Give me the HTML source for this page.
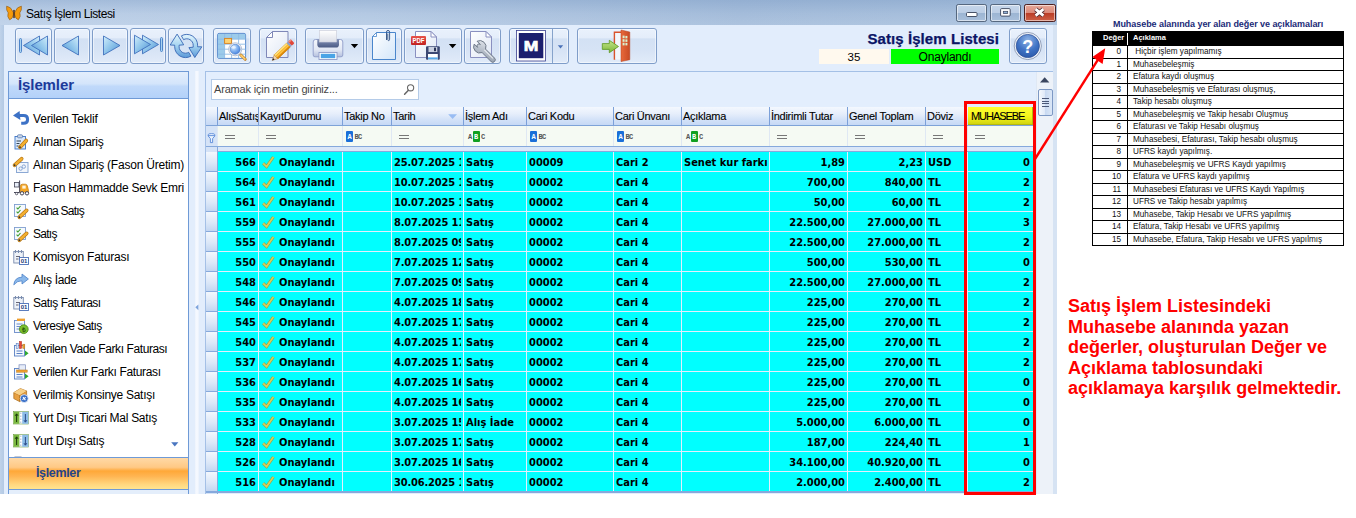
<!DOCTYPE html><html><head><meta charset="utf-8"><title>Satış İşlem Listesi</title><style>
*{box-sizing:border-box;margin:0;padding:0}
html,body{width:1356px;height:518px;background:#fff;overflow:hidden}
body{position:relative;font-family:"Liberation Sans",sans-serif;font-size:11px;color:#000}
.abs{position:absolute}
svg{position:absolute;overflow:visible}
#win{position:absolute;left:0;top:0;width:1057px;height:494px;background:#e2edfc;overflow:hidden}
#title{position:absolute;left:0;top:0;width:1057px;height:25px;background:linear-gradient(rgba(110,145,190,.30) 0%,rgba(255,255,255,0) 55%,rgba(235,245,255,.12) 100%),linear-gradient(90deg,#bccfe7 0%,#b4c9e3 35%,#a4bcda 70%,#a8c0dd 100%)}
#title .t{position:absolute;left:26px;top:7px;font-size:12px;line-height:14px;color:#000;letter-spacing:-0.42px}
#frameL{position:absolute;left:0;top:25px;width:4px;height:470px;background:linear-gradient(90deg,#bfd2e9,#b3c9e4)}
#frameR{position:absolute;left:1053px;top:25px;width:4px;height:470px;background:#d6e3f3}
.wb{position:absolute;top:4.2px;height:17.4px;border:1px solid #56687f;border-radius:2.2px;background:linear-gradient(#c6d6ea 0%,#bccee5 47%,#9cb5d3 52%,#a9c0db 100%);box-shadow:inset 0 0 0 1px rgba(255,255,255,.55)}
.wb.close{background:linear-gradient(#e6a899 0%,#dc8b7b 47%,#bb3d27 52%,#cd6248 100%);border-color:#4e2020}
.tb{position:absolute;top:28.2px;height:35.4px;border:1px solid #7f9dc9;border-radius:3px;background:linear-gradient(#e9f1fc 0%,#e4edfa 26%,#d3e1f4 29%,#d6e3f5 60%,#e1ebf9 100%);box-shadow:inset 0 0 0 1px rgba(255,255,255,.5)}
#bigtitle{position:absolute;right:58px;top:30px;font-weight:bold;font-size:15px;line-height:18px;color:#0b1566;letter-spacing:.08px;white-space:nowrap;-webkit-text-stroke:.25px #0b1566}
#b35{position:absolute;left:819px;top:49px;width:70px;height:15px;background:#fff9ee;font-size:11.5px;line-height:17px;text-align:center}
#bon{position:absolute;left:891px;top:49px;width:108px;height:15px;background:#00ff00;font-size:12px;line-height:17px;letter-spacing:-.2px;text-align:center}
#tline{display:none}
/* side panel */
#side{position:absolute;left:8px;top:71px;width:181px;height:424px;border:1px solid #6f9ad6;background:#fff;overflow:hidden}
#sideh{position:absolute;left:0;top:0;width:179px;height:27px;background:linear-gradient(#e3eefc 0%,#d4e5fb 45%,#c0d9fa 55%,#b3d1f9 100%);border-bottom:1px solid #6f9ad6}
#sideh span{position:absolute;left:9px;top:4px;font-weight:bold;font-size:15px;line-height:18px;color:#1c3a9a;letter-spacing:-.1px}
.si{position:absolute;left:24px;font-size:12px;line-height:14px;white-space:nowrap;letter-spacing:-.22px;color:#000}
#sideb{position:absolute;left:0;top:385px;width:179px;height:33px;border-top:1px solid #6f9ad6;border-bottom:1px solid #6f9ad6;background:linear-gradient(#ffd9a6 0%,#ffc985 30%,#ffa838 42%,#ffb654 60%,#ffd77f 85%,#ffe48f 100%)}
#sideb span{position:absolute;left:27px;top:8px;font-weight:bold;font-size:12.5px;line-height:15px;color:#264488;letter-spacing:-.35px}
#sidef{position:absolute;left:0;top:418px;width:179px;height:6px;background:#e4eefb}
#split{position:absolute;left:195px;top:71px;width:4px;height:424px;background:linear-gradient(90deg,#edf3fd,#f7faff 50%,#eaf1fc)}
/* grid */
#grid{position:absolute;left:205px;top:71px;width:848px;height:424px;border:1px solid #a4c0e6;background:#e3eefd}
#search{position:absolute;left:211px;top:79px;width:208px;height:21px;border:1px solid #b4cbe8;background:#fff}
#search span{position:absolute;left:2px;top:3px;font-size:11px;line-height:13px;color:#444;letter-spacing:-.17px;white-space:nowrap}
#hdr{position:absolute;left:206px;top:107px;width:828px;height:18px;background:linear-gradient(#f4f8fe 0%,#e6eefb 38%,#d2e1f8 72%,#c6d9f5 100%)}
.hc{position:absolute;top:0;height:18px;border-left:1px solid #7ba0d9;font-size:11px;line-height:18px;padding-left:1px;white-space:nowrap;overflow:hidden;letter-spacing:-.28px;-webkit-text-stroke:.1px #000}
#hline{position:absolute;left:206px;top:125px;width:828px;height:1px;background:#7ea3d8}
#frow{position:absolute;left:217px;top:126px;width:817px;height:20px;background:#f5faf3}
.fc{position:absolute;top:0;height:20px;border-left:1px solid #dfe8f3}
#ind{position:absolute;left:206px;top:126px;width:11px;height:368px;background:#d5e3f7}
.cell{position:absolute;height:19px;line-height:21px;font-weight:bold;font-size:11px;white-space:nowrap;overflow:hidden;font-family:"DejaVu Sans Condensed","DejaVu Sans","Liberation Sans",sans-serif;font-stretch:condensed;background:#00ffff;color:#000}
.r{text-align:right;padding-right:2px}
.l{padding-left:2px;border-right:2.5px solid #0ff}
.last{padding-right:4px}

.eq{position:absolute;left:7px;top:9px;width:9.5px;height:4px;border-top:1px solid #777;border-bottom:1px solid #777}
.abc{position:absolute;left:3px;top:5px;height:11px;font-family:"Liberation Mono",monospace;font-size:7px;line-height:12px;font-weight:bold;color:#555;letter-spacing:-.55px;white-space:nowrap}
.abc.g{left:4px}
.abc b{display:inline-block;width:7px;height:11px;text-align:center;color:#fff;border-radius:1px;margin-right:1.4px;letter-spacing:0}
.abc b.bl{background:#1a6fd8}
.abc b.gr{background:#10a020;margin-left:1px}

.indc{position:absolute;left:206px;width:11px;height:20px;background:linear-gradient(#f3f7fd 0%,#dce8f8 55%,#c3d6f1 100%);border-bottom:1px solid #86a9dc}
#sb{position:absolute;left:1036px;top:72px;width:17px;height:423px;background:#edf2f9;border-left:1px solid #dfe8f4}
#sbt{position:absolute;left:1px;top:17px;width:15px;height:27px;border:1px solid #7c98c4;border-radius:2px;background:linear-gradient(90deg,#f6f9fd 0%,#dfe9f8 45%,#c9daf2 50%,#dbe7f7 100%)}
#sbt i{position:absolute;left:3px;top:8px;width:7px;height:9px;background:repeating-linear-gradient(#4a5878 0,#4a5878 1px,transparent 1px,transparent 2.5px)}
/* right side */
#ltitle{position:absolute;left:1113px;top:18px;font-weight:bold;font-size:9px;line-height:12px;color:#1a2a78;white-space:nowrap;letter-spacing:-.06px}
#leg{position:absolute;left:1092px;top:31px;width:252px;height:215px;border:1px solid #000;background:#fff}
.lr{position:absolute;left:0;width:250px;border-top:1.3px solid #000;font-size:8.2px;line-height:11px;color:#111}
.lr .n{position:absolute;left:0;top:0;width:28px;text-align:right}
.lr .d{position:absolute;left:40px;top:0;white-space:nowrap}
#redtxt{position:absolute;left:1068px;top:296px;font-weight:bold;font-size:18px;line-height:20.5px;color:#ff0000;white-space:nowrap}
</style></head><body>
<div id="win">
<div id="title"><span class="t">Satış İşlem Listesi</span>
<div class="wb" style="left:956.2px;width:31.2px"></div><div class="wb" style="left:990.3px;width:31.2px"></div><div class="wb close" style="left:1024.2px;width:31.6px"></div>
<svg style="left:0;top:0" width="1057" height="25"><rect x="966.5" y="12.5" width="10.5" height="4" rx="1" fill="#fff" stroke="#384258" stroke-width=".9"/><rect x="1000.6" y="8.6" width="9.6" height="7.5" rx="1" fill="#fff" stroke="#384258" stroke-width=".9"/><rect x="1003.3" y="11.3" width="4.4" height="2.3" fill="#8fb0d8" stroke="#384258" stroke-width=".7"/><path d="M1035.6,9.2 L1043.4,15.6 M1043.4,9.2 L1035.6,15.6" stroke="#4a2a30" stroke-width="4.4"/><path d="M1035.6,9.2 L1043.4,15.6 M1043.4,9.2 L1035.6,15.6" stroke="#fff" stroke-width="2.8"/><g><path d="M13.4,12.6 Q11,6.4 6.6,6.2 Q6,10.4 8.2,12.8 Q6.8,16.6 9.6,19.8 Q12.6,19 13.4,14.8 Z" fill="#f59a0c" stroke="#8a5410" stroke-width=".6"/><path d="M14.6,12.6 Q17,6.4 21.4,6.2 Q22,10.4 19.8,12.8 Q21.2,16.6 18.4,19.8 Q15.4,19 14.6,14.8 Z" fill="#f59a0c" stroke="#8a5410" stroke-width=".6"/><path d="M14,10.5 V17.5" stroke="#4a2c14" stroke-width="1.5" stroke-linecap="round"/></g></svg>
</div>
<div id="frameL"></div><div id="frameR"></div>
<div class="tb" style="left:15.3px;width:36.9px"></div>
<div class="tb" style="left:53.6px;width:36.7px"></div>
<div class="tb" style="left:91.6px;width:36.6px"></div>
<div class="tb" style="left:129.6px;width:36.7px"></div>
<div class="tb" style="left:167.8px;width:36.6px"></div>
<div class="tb" style="left:213.2px;width:37.7px"></div>
<div class="tb" style="left:259.2px;width:37.6px"></div>
<div class="tb" style="left:305.3px;width:58.8px"></div>
<div class="tb" style="left:365.6px;width:36.6px"></div>
<div class="tb" style="left:403.8px;width:58.5px"></div>
<div class="tb" style="left:463.8px;width:37.0px"></div>
<div class="tb" style="left:509.4px;width:59.3px"></div>
<div class="tb" style="left:577.1px;width:79.5px"></div>
<div class="tb" style="left:1009.2px;width:37.6px"></div>
<svg style="left:0;top:0" width="1057" height="494"><defs>
<linearGradient id="gTri" x1="0" y1="0" x2="1" y2="1"><stop offset="0" stop-color="#d3effb"/><stop offset=".5" stop-color="#8cc3ea"/><stop offset="1" stop-color="#4f8fd0"/></linearGradient>
<linearGradient id="gTriL" x1="1" y1="0" x2="0" y2="1"><stop offset="0" stop-color="#d3effb"/><stop offset=".5" stop-color="#8cc3ea"/><stop offset="1" stop-color="#4f8fd0"/></linearGradient>
<linearGradient id="gRef" x1="0" y1="0" x2="0" y2="1"><stop offset="0" stop-color="#e4f6fd"/><stop offset=".5" stop-color="#a4d3f0"/><stop offset="1" stop-color="#5a98d8"/></linearGradient>
<linearGradient id="gDoc" x1="0" y1="0" x2="1" y2="1"><stop offset="0" stop-color="#ffffff"/><stop offset="1" stop-color="#dfe7f5"/></linearGradient>
<linearGradient id="gDocB" x1="0" y1="0" x2="1" y2="1"><stop offset="0" stop-color="#ffffff"/><stop offset="1" stop-color="#d3e6fa"/></linearGradient>
<radialGradient id="gLens" cx=".35" cy=".3" r=".8"><stop offset="0" stop-color="#d9ecff"/><stop offset=".5" stop-color="#7fb0f0"/><stop offset="1" stop-color="#3c78d8"/></radialGradient>
<linearGradient id="gPrn" x1="0" y1="0" x2="0" y2="1"><stop offset="0" stop-color="#f4f7fc"/><stop offset=".6" stop-color="#e1e7f4"/><stop offset="1" stop-color="#b4c0de"/></linearGradient>
<linearGradient id="gSlot" x1="0" y1="0" x2="0" y2="1"><stop offset="0" stop-color="#8694b8"/><stop offset="1" stop-color="#4a5a84"/></linearGradient>
<linearGradient id="gPaper" x1="0" y1="0" x2="0" y2="1"><stop offset="0" stop-color="#ffffff"/><stop offset="1" stop-color="#dcdfe8"/></linearGradient>
<linearGradient id="gPdf" x1="0" y1="0" x2="0" y2="1"><stop offset="0" stop-color="#e8544a"/><stop offset="1" stop-color="#c02020"/></linearGradient>
<linearGradient id="gWr" x1="0" y1="0" x2="1" y2="1"><stop offset="0" stop-color="#e4e8ee"/><stop offset=".5" stop-color="#b4bcc8"/><stop offset="1" stop-color="#8c96a6"/></linearGradient>
<linearGradient id="gGrn" x1="0" y1="0" x2="0" y2="1"><stop offset="0" stop-color="#c4e48a"/><stop offset="1" stop-color="#7cb838"/></linearGradient>
<linearGradient id="gDoor" x1="0" y1="0" x2="1" y2="0"><stop offset="0" stop-color="#e86a3c"/><stop offset="1" stop-color="#c84a24"/></linearGradient>
<radialGradient id="gHelp" cx=".5" cy=".25" r=".9"><stop offset="0" stop-color="#8fb4e6"/><stop offset=".5" stop-color="#3f72c4"/><stop offset="1" stop-color="#2450a0"/></radialGradient>
<linearGradient id="gPen" x1="0" y1="0" x2="1" y2="0"><stop offset="0" stop-color="#ffd75a"/><stop offset=".5" stop-color="#f5a818"/><stop offset="1" stop-color="#d88408"/></linearGradient>
<linearGradient id="gThumb" x1="0" y1="0" x2="1" y2="0"><stop offset="0" stop-color="#f4f8fd"/><stop offset=".45" stop-color="#dbe7f7"/><stop offset=".5" stop-color="#c5d8f1"/><stop offset="1" stop-color="#d9e6f7"/></linearGradient>
</defs><rect x="19.5" y="38.5" width="2" height="14" rx="1" fill="#a9d3f2" stroke="#4e84c8" stroke-width="1"/><polygon points="23.5,45.5 39.5,36 39.5,55" fill="url(#gTriL)" stroke="#3a6cba" stroke-width=".85" stroke-linejoin="round"/><polygon points="31.5,45.5 47.5,36 47.5,55" fill="url(#gTriL)" stroke="#3a6cba" stroke-width=".85" stroke-linejoin="round"/><polygon points="62,45.5 78.5,36 78.5,55" fill="url(#gTriL)" stroke="#3a6cba" stroke-width=".85" stroke-linejoin="round"/><polygon points="120,45.5 103.5,36 103.5,55" fill="url(#gTri)" stroke="#3a6cba" stroke-width=".85" stroke-linejoin="round"/><polygon points="158.5,44.5 142.5,35.2 142.5,53.8" fill="url(#gTri)" stroke="#3a6cba" stroke-width=".85" stroke-linejoin="round"/><polygon points="150.5,44.5 134.5,35.2 134.5,53.8" fill="url(#gTri)" stroke="#3a6cba" stroke-width=".85" stroke-linejoin="round"/><rect x="160.5" y="37.5" width="2" height="14" rx="1" fill="#a9d3f2" stroke="#4e84c8" stroke-width="1"/><g stroke="#3868b4" stroke-width=".9" stroke-linejoin="round" fill="url(#gRef)"><path d="M190.9,56.15 A10.8,10.8 0 0 1 174.7,46.8 L174.7,45.2 L170.2,45 L177.1,34.1 L183.7,44.8 L179.1,45.2 L179.1,46.8 A6.4,6.4 0 0 0 188.7,52.34 Z"/><path d="M181.4,35.85 A10.8,10.8 0 0 1 197.6,45.2 L197.6,46.8 L201.8,46.8 L194.8,57.5 L188.9,47.6 L193.2,47.2 L193.2,45.2 A6.4,6.4 0 0 0 183.6,39.66 Z"/></g><rect x="217.6" y="33.4" width="28" height="25" rx="1.5" fill="#fff" stroke="#4a80c8" stroke-width=".9"/><rect x="218" y="34" width="27.2" height="5" fill="#9ccbea"/><rect x="218" y="34" width="6.5" height="24" fill="#9ccbea"/><path d="M218,39.2H245.5 M218,44.2H245.5 M218,49.2H245.5 M218,54.2H245.5 M224.6,34V58 M231.6,34V58 M238.6,34V58" stroke="#8fbbe4" stroke-width=".9" fill="none"/><rect x="224.6" y="38.4" width="7" height="5" fill="#ffd372" stroke="#d8801c" stroke-width=".9"/><line x1="240.6" y1="54.8" x2="245.2" y2="59.3" stroke="#c08028" stroke-width="3" stroke-linecap="round"/><line x1="240.9" y1="55.1" x2="245" y2="59.1" stroke="#ffd070" stroke-width="1.5" stroke-linecap="round"/><circle cx="235.2" cy="49.3" r="6.5" fill="#f6f8fc" stroke="#a4b0c6" stroke-width=".8"/><circle cx="235.2" cy="49.3" r="5" fill="url(#gLens)" stroke="#4f80c8" stroke-width=".6"/><ellipse cx="233.6" cy="47.2" rx="2.2" ry="1.5" fill="#fff" opacity=".55"/><path d="M272.5,31.5 H288 V57.5 H266.5 V37.5 Z" fill="url(#gDoc)" stroke="#7f88b8"/><path d="M272.5,31.5 V37.5 H266.5 Z" fill="#fff" stroke="#7f88b8" stroke-linejoin="round"/><g transform="translate(272.2,60.4) rotate(-43.2)"><polygon points="0,0 5.4,-2.7 5.4,2.7" fill="#f2d5a8" stroke="#a87840" stroke-width=".5"/><polygon points="0,0 2.2,-1.1 2.2,1.1" fill="#223"/><rect x="5.4" y="-2.7" width="17" height="5.4" fill="#f5a818" stroke="#b87410" stroke-width=".5"/><rect x="5.4" y="-2.7" width="17" height="1.7" fill="#ffe07a"/><rect x="5.4" y="-.3" width="17" height="1.1" fill="#ffc64a"/><rect x="5.4" y="1.3" width="17" height="1.4" fill="#d8860c"/><rect x="22.4" y="-2.7" width="2" height="5.4" fill="#8aa0cc"/><rect x="24.4" y="-2.7" width="3.6" height="5.4" rx="1" fill="#e0483a"/><rect x="24.4" y="-2.7" width="3.6" height="1.6" rx=".8" fill="#f08878"/></g><rect x="319.5" y="30.5" width="17" height="12" fill="url(#gPaper)" stroke="#c4c8d8" stroke-width=".8"/><path d="M315.5,39.5 H340.5 Q342.8,39.5 342.8,42 V55 Q342.8,56.8 341,56.8 H315 Q313.2,56.8 313.2,55 V42 Q313.2,39.5 315.5,39.5 Z" fill="url(#gPrn)" stroke="#8f9cc8" stroke-width=".9"/><path d="M317.3,39.3 H339 V44.5 Q339,47.6 336,47.6 H320.3 Q317.3,47.6 317.3,44.5 Z" fill="url(#gSlot)"/><rect x="319.5" y="30.5" width="17" height="11.5" fill="url(#gPaper)" stroke="#d0d4e0" stroke-width=".6"/><rect x="319" y="52.5" width="18" height="7" fill="#fff" stroke="#8f9cc8" stroke-width=".9"/><rect x="320.8" y="53.8" width="14.4" height="4.4" fill="#4aa4e6"/><polygon points="350.8,44 358.2,44 354.5,48.2" fill="#000"/><path d="M376.5,32.5 H395.5 V59.5 H372.5 V36.5 Z" fill="url(#gDocB)" stroke="#4a86cc" stroke-width="1"/><path d="M376.5,32.5 V36.5 H372.5 Z" fill="#fff" stroke="#4a86cc" stroke-width=".8" stroke-linejoin="round"/><path d="M386.5,40 V32.2 Q386.5,30.4 388,30.4 Q389.6,30.4 389.6,32.2 V39.2 Q389.6,40.6 388.6,40.6 Q387.8,40.6 387.8,39.4 V33.5" fill="none" stroke="#3f5e8e" stroke-width="1"/><path d="M415.5,31.5 H431 L436.5,37 V57.5 H415.5 Z" fill="url(#gDoc)" stroke="#8a90c0"/><path d="M431,31.5 V37 H436.5 Z" fill="#fff" stroke="#8a90c0" stroke-linejoin="round"/><rect x="411" y="36" width="15" height="9" rx="1" fill="url(#gPdf)"/><text x="418.5" y="43.2" font-family="Liberation Sans,sans-serif" font-weight="bold" font-size="6.8" fill="#fff" text-anchor="middle" textLength="12" lengthAdjust="spacingAndGlyphs">PDF</text><rect x="426" y="46.2" width="13.8" height="13.6" rx="1" fill="#3b4874"/><rect x="428.5" y="47" width="8.8" height="5" fill="#c9d0e0"/><rect x="434" y="47.6" width="2" height="3.6" fill="#2a3358"/><rect x="428" y="54" width="9.8" height="5.8" fill="#fff"/><rect x="428" y="57.4" width="9.8" height="2" fill="#58a8e8"/><polygon points="448.9,44 456.3,44 452.6,48.2" fill="#000"/><path d="M470.5,31.5 H486 L491.5,37 V57.5 H470.5 Z" fill="url(#gDoc)" stroke="#8a90c0"/><path d="M486,31.5 V37 H491.5 Z" fill="#fff" stroke="#8a90c0" stroke-linejoin="round"/><g transform="translate(479.8,46.8) rotate(45)"><path d="M-5.87,-2.0 L-1.2,-2.0 A2.0,2.0 0 0 0 -1.2,2.0 L-5.87,2.0 A6.2,6.2 0 0 0 5.70,2.45 L18.4,2.45 A2.45,2.45 0 0 0 18.4,-2.45 L5.70,-2.45 A6.2,6.2 0 0 0 -5.87,-2.0 Z" fill="url(#gWr)" stroke="#6a7484" stroke-width=".9" stroke-linejoin="round"/><path d="M5.5,-1 L17.5,-1" stroke="#f2f4f8" stroke-width="1.1" opacity=".85"/></g><rect x="516.5" y="30.5" width="29" height="30.5" fill="#fff" stroke="#3a3f8e" stroke-width=".8"/><rect x="518.8" y="33" width="24.5" height="25.2" fill="#1b1e6e"/><text x="531" y="51" font-family="Liberation Sans,sans-serif" font-weight="bold" font-size="15.4" fill="#fff" text-anchor="middle" textLength="14.6" lengthAdjust="spacingAndGlyphs" stroke="#fff" stroke-width=".7">M</text><line x1="552.5" y1="29" x2="552.5" y2="63" stroke="#86a3cb"/><polygon points="557.8,45.3 563.2,45.3 560.5,48.5" fill="#4a72b8"/><path d="M614.5,59.7 V32.2 H622" fill="none" stroke="#d9532c" stroke-width="1.6"/><rect x="615.3" y="33" width="6" height="26.5" fill="#f2f6fb"/><polygon points="621,30 629.8,32 629.8,59.7 621,61.6" fill="url(#gDoor)" stroke="#b8401c" stroke-width=".5"/><g fill="#d8f0d0"><rect x="622.6" y="35.6" width="2" height="2.6"/><rect x="625.4" y="35.9" width="2" height="2.5"/><rect x="622.6" y="39.2" width="2" height="2.6"/><rect x="625.4" y="39.4" width="2" height="2.5"/><rect x="622.6" y="42.8" width="2" height="2.6"/><rect x="625.4" y="42.9" width="2" height="2.5"/></g><polygon points="602.3,43.6 609.3,43.6 609.3,40.3 618.5,46.5 609.3,52.7 609.3,49.4 602.3,49.4" fill="url(#gGrn)" stroke="#5c9820" stroke-width=".8" stroke-linejoin="round"/><circle cx="1027.8" cy="46" r="13.6" fill="#eef2f8" stroke="#8a98b4" stroke-width=".9"/><circle cx="1027.8" cy="46" r="11.6" fill="url(#gHelp)" stroke="#2a4c94" stroke-width=".7"/><text x="1027.8" y="52.6" font-family="Liberation Sans,sans-serif" font-weight="bold" font-size="18" fill="#fff" text-anchor="middle">?</text></svg>
<div id="bigtitle">Satış İşlem Listesi</div><div id="b35">35</div><div id="bon">Onaylandı</div><div id="tline"></div>
<div id="side"><div id="sideh"><span>İşlemler</span></div>
<svg style="left:4px;top:39px" width="16" height="16" viewBox="0 0 16 16"><path d="M6,4.6 H10.6 Q14.6,4.6 14.6,8.4 Q14.6,12.2 10.6,12.2 H8.2" fill="none" stroke="#3d72c6" stroke-width="3"/><polygon points="0,4.4 6.6,0 7.4,9" fill="#3d72c6"/></svg><div class="si" style="top:40px;letter-spacing:-0.169px">Verilen Teklif</div>
<svg style="left:4px;top:62px" width="16" height="16" viewBox="0 0 16 16"><rect x="2" y="2.5" width="10.5" height="12.5" fill="#dbe9fb" stroke="#3a74c8" stroke-width=".9"/><rect x="4.5" y=".8" width="5" height="3" rx="1" fill="#c8d4e6" stroke="#4a6ea8" stroke-width=".7"/><path d="M3.5,7H8M3.5,9.5H6.5M3.5,12H5.5" stroke="#345" stroke-width="1"/><line x1="7" y1="13.2" x2="13.2" y2="6.6" stroke="#b87818" stroke-width="3.8" stroke-linecap="round"/><line x1="7" y1="13.2" x2="13.2" y2="6.6" stroke="#f4b030" stroke-width="2.4" stroke-linecap="round"/><circle cx="7" cy="13.2" r=".9" fill="#333"/></svg><div class="si" style="top:63px;letter-spacing:-0.253px">Alınan Sipariş</div>
<svg style="left:4px;top:85px" width="16" height="16" viewBox="0 0 16 16"><rect x="3.5" y="5.5" width="11.5" height="10" fill="#f2f6fc" stroke="#7f9fd0" stroke-width=".9"/><circle cx="7.6" cy="11.6" r="1.7" fill="none" stroke="#7f9fd0" stroke-width=".9"/><circle cx="10.8" cy="9.6" r="1.7" fill="none" stroke="#7f9fd0" stroke-width=".9"/><line x1="1.6" y1="8.2" x2="8.6" y2="1.8" stroke="#b87818" stroke-width="3.8" stroke-linecap="round"/><line x1="1.6" y1="8.2" x2="8.6" y2="1.8" stroke="#f4b030" stroke-width="2.4" stroke-linecap="round"/><circle cx="1.6" cy="8.2" r=".9" fill="#333"/></svg><div class="si" style="top:86px;letter-spacing:-0.220px">Alınan Sipariş (Fason Üretim)</div>
<svg style="left:4px;top:108px" width="16" height="16" viewBox="0 0 16 16"><rect x="1.5" y="2.5" width="4.5" height="4.5" fill="#e8eef8" stroke="#445" stroke-width=".8"/><path d="M6.6,.5V12.5H1" stroke="#445" stroke-width="1" fill="none"/><path d="M7.4,12 V6.2 Q7.4,4.2 9.4,4.2 H12.4 Q14,4.2 14.4,6 L15.4,10 V12 Z" fill="#f5a623" stroke="#c47a10" stroke-width=".7"/><rect x="9.3" y="5.6" width="3.4" height="3" fill="#fff4dc"/><circle cx="9" cy="13.3" r="1.7" fill="#fff" stroke="#445" stroke-width="1"/><circle cx="14" cy="13.3" r="1.7" fill="#fff" stroke="#445" stroke-width="1"/><circle cx="3.6" cy="13.6" r="1.2" fill="#fff" stroke="#445" stroke-width=".8"/></svg><div class="si" style="top:109px;letter-spacing:-0.238px">Fason Hammadde Sevk Emri</div>
<svg style="left:4px;top:131px" width="16" height="16" viewBox="0 0 16 16"><rect x="1.5" y="1.5" width="11" height="12" fill="#f6f9fd" stroke="#7f9fd0" stroke-width=".9"/><path d="M3.6,4.6l1.3,1.4l2.6,-3M3.6,8.6l1.3,1.4l2.6,-3" stroke="#3a9a2a" stroke-width="1.1" fill="none"/><line x1="6.4" y1="14.2" x2="13.6" y2="7.4" stroke="#b87818" stroke-width="3.8" stroke-linecap="round"/><line x1="6.4" y1="14.2" x2="13.6" y2="7.4" stroke="#f4b030" stroke-width="2.4" stroke-linecap="round"/><circle cx="6.4" cy="14.2" r=".9" fill="#333"/></svg><div class="si" style="top:132px;letter-spacing:-0.771px">Saha Satış</div>
<svg style="left:4px;top:154px" width="16" height="16" viewBox="0 0 16 16"><rect x="1.5" y="1.5" width="11" height="12" fill="#f6f9fd" stroke="#7f9fd0" stroke-width=".9"/><path d="M3.6,4.6l1.3,1.4l2.6,-3M3.6,8.6l1.3,1.4l2.6,-3" stroke="#3a9a2a" stroke-width="1.1" fill="none"/><line x1="6.4" y1="14.2" x2="13.6" y2="7.4" stroke="#b87818" stroke-width="3.8" stroke-linecap="round"/><line x1="6.4" y1="14.2" x2="13.6" y2="7.4" stroke="#f4b030" stroke-width="2.4" stroke-linecap="round"/><circle cx="6.4" cy="14.2" r=".9" fill="#333"/></svg><div class="si" style="top:155px;letter-spacing:-0.730px">Satış</div>
<svg style="left:4px;top:177px" width="16" height="16" viewBox="0 0 16 16"><rect x="0.8" y="2.5" width="9.5" height="11.5" fill="#eef2f8" stroke="#7a8cae" stroke-width=".9"/><path d="M2.5,1v3M5.5,1v3M8.5,1v3" stroke="#7a8cae" stroke-width="1.1"/><path d="M3,7.5H7M3,10H5.5" stroke="#667" stroke-width="1"/><rect x="6.5" y="8.5" width="9" height="7" fill="#fff" stroke="#4a70b8" stroke-width=".9"/><text x="11" y="14.3" font-family="Liberation Sans,sans-serif" font-size="6" font-weight="bold" fill="#223a78" text-anchor="middle">01</text></svg><div class="si" style="top:178px;letter-spacing:-0.220px">Komisyon Faturası</div>
<svg style="left:4px;top:200px" width="16" height="16" viewBox="0 0 16 16"><path d="M.8,12.8 Q1.6,5.2 9,5.2 L9,2 L15.4,7 L9,12 L9,8.8 Q4.2,8.6 .8,12.8 Z" fill="#8ab8ea" stroke="#4a80c8" stroke-width=".8" stroke-linejoin="round"/></svg><div class="si" style="top:201px;letter-spacing:-0.332px">Alış İade</div>
<svg style="left:4px;top:223px" width="16" height="16" viewBox="0 0 16 16"><rect x="0.8" y="2.5" width="9.5" height="11.5" fill="#eef2f8" stroke="#7a8cae" stroke-width=".9"/><path d="M2.5,1v3M5.5,1v3M8.5,1v3" stroke="#7a8cae" stroke-width="1.1"/><path d="M3,7.5H7M3,10H5.5" stroke="#667" stroke-width="1"/><rect x="6.5" y="8.5" width="9" height="7" fill="#fff" stroke="#4a70b8" stroke-width=".9"/><text x="11" y="14.3" font-family="Liberation Sans,sans-serif" font-size="6" font-weight="bold" fill="#223a78" text-anchor="middle">01</text></svg><div class="si" style="top:224px;letter-spacing:-0.500px">Satış Faturası</div>
<svg style="left:4px;top:246px" width="16" height="16" viewBox="0 0 16 16"><rect x="1.5" y="2.5" width="10" height="12" fill="#f4f8fd" stroke="#6a8cc8" stroke-width=".9"/><rect x="4" y=".6" width="8" height="2.4" fill="#f0a030"/><path d="M3.5,6H9.5M3.5,8.5H8M3.5,11H6.5" stroke="#6a8cc8" stroke-width="1"/><circle cx="10.8" cy="11.2" r="4.4" fill="#7cc030" stroke="#4a8a18" stroke-width=".8"/><text x="10.8" y="13.8" font-family="Liberation Sans,sans-serif" font-size="6.5" font-weight="bold" fill="#2a5a08" text-anchor="middle">₺</text></svg><div class="si" style="top:247px;letter-spacing:-0.572px">Veresiye Satış</div>
<svg style="left:4px;top:269px" width="16" height="16" viewBox="0 0 16 16"><rect x="1.5" y="4.5" width="10" height="10.5" fill="#f4f8fd" stroke="#5a80c4" stroke-width=".9"/><rect x="3.2" y="2.5" width="2" height="5" fill="#dfe8f6" stroke="#5a80c4" stroke-width=".6"/><rect x="6.4" y=".5" width="2.2" height="7" fill="#e8483a" stroke="#b02818" stroke-width=".5"/><rect x="9.8" y="3.2" width="2" height="4.2" fill="#f0a030" stroke="#b87818" stroke-width=".5"/><path d="M3.5,10H9.5M3.5,12.5H9.5" stroke="#5a80c4" stroke-width="1"/><polygon points="12,9.5 15.6,12.2 12,15" fill="#2eaa2e"/></svg><div class="si" style="top:270px;letter-spacing:-0.403px">Verilen Vade Farkı Faturası</div>
<svg style="left:4px;top:292px" width="16" height="16" viewBox="0 0 16 16"><rect x="1.5" y="4.5" width="10" height="10.5" fill="#f4f8fd" stroke="#5a80c4" stroke-width=".9"/><rect x="6" y=".8" width="6.5" height="5.5" fill="#e6ecf8" stroke="#7a8cba" stroke-width=".7"/><rect x="3.6" y="6" width="10.6" height="2.2" fill="#f0a030" stroke="#b87818" stroke-width=".5"/><path d="M3.5,10.5H9.5M3.5,13H9.5" stroke="#5a80c4" stroke-width="1"/><polygon points="12,9.5 15.6,12.2 12,15" fill="#2eaa2e"/></svg><div class="si" style="top:293px;letter-spacing:-0.347px">Verilen Kur Farkı Faturası</div>
<svg style="left:4px;top:315px" width="16" height="16" viewBox="0 0 16 16"><path d="M.8,5.6 L7.4,1.6 L13.6,4 L13.6,10.6 L6.6,14.6 L.8,11.6 Z" fill="#e8a040" stroke="#a86818" stroke-width=".7" stroke-linejoin="round"/><path d="M.8,5.6 L6.6,8.2 L13.6,4 M6.6,8.2V14.6" stroke="#a86818" stroke-width=".7" fill="none"/><path d="M.8,5.6 L7.4,1.6 L13.6,4 L6.6,8.2Z" fill="#f8d088"/><circle cx="11.2" cy="11.6" r="4" fill="#3a70c8" stroke="#e8eef8" stroke-width=".8"/><path d="M9.4,12.6l3.4,-2.2M10,10.2l2.4,3" stroke="#fff" stroke-width="1.1"/></svg><div class="si" style="top:316px;letter-spacing:-0.280px">Verilmiş Konsinye Satışı</div>
<svg style="left:4px;top:338px" width="16" height="16" viewBox="0 0 16 16"><rect x=".6" y="1.6" width="15" height="12.4" fill="#fff" stroke="#6a9a3a" stroke-width=".6"/><rect x=".8" y="1.8" width="5.6" height="12" fill="#7ab840"/><rect x="9.2" y="1.8" width="6.2" height="12" fill="#8cbce8"/><path d="M3.6,12V4M2.2,5.8L3.6,3.8L5,5.8" stroke="#1a3a08" stroke-width="1" fill="none"/><path d="M12.4,4V12M11,10.2L12.4,12.2L13.8,10.2" stroke="#2a4a88" stroke-width="1" fill="none"/><path d="M7.8,2.5V13.5" stroke="#a8b8d0" stroke-width="1" stroke-dasharray="1.5 1.5"/></svg><div class="si" style="top:339px;letter-spacing:-0.280px">Yurt Dışı Ticari Mal Satış</div>
<svg style="left:4px;top:361px" width="16" height="16" viewBox="0 0 16 16"><rect x=".6" y="1.6" width="15" height="12.4" fill="#fff" stroke="#6a9a3a" stroke-width=".6"/><rect x=".8" y="1.8" width="5.6" height="12" fill="#7ab840"/><rect x="9.2" y="1.8" width="6.2" height="12" fill="#8cbce8"/><path d="M3.6,12V4M2.2,5.8L3.6,3.8L5,5.8" stroke="#1a3a08" stroke-width="1" fill="none"/><path d="M12.4,4V12M11,10.2L12.4,12.2L13.8,10.2" stroke="#2a4a88" stroke-width="1" fill="none"/><path d="M7.8,2.5V13.5" stroke="#a8b8d0" stroke-width="1" stroke-dasharray="1.5 1.5"/></svg><div class="si" style="top:362px;letter-spacing:-0.379px">Yurt Dışı Satış</div>
<svg style="left:161.5px;top:369.5px" width="8" height="5"><polygon points=".2,.2 7.4,.2 3.8,4.4" fill="#4a76c0"/></svg><div class="abs" style="left:4.5px;top:383.5px;width:8.5px;height:4px;border:1px solid #c4c9d4;border-radius:1px"></div>
<div id="sideb"><span>İşlemler</span></div><div id="sidef"></div></div>
<div id="split"></div><svg style="left:194.5px;top:304px" width="4" height="7"><polygon points="3.4,.4 3.4,6.2 .3,3.3" fill="#7ea4dc"/></svg>
<div id="grid"></div><div id="search"><span>Aramak için metin giriniz...</span><svg style="left:191px;top:3px" width="13" height="13" viewBox="0 0 13 13"><circle cx="7.6" cy="4.8" r="3.1" fill="none" stroke="#666" stroke-width="1.1"/><line x1="5.4" y1="7.2" x2="1.6" y2="11.2" stroke="#666" stroke-width="1.5" stroke-linecap="round"/></svg></div>
<div id="hdr">
<div class="hc" style="left:11px;width:41px">AlışSatış</div>
<div class="hc" style="left:52px;width:84px">KayıtDurumu</div>
<div class="hc" style="left:136px;width:49px">Takip No</div>
<div class="hc" style="left:185px;width:72px">Tarih</div>
<div class="hc" style="left:257px;width:63px">İşlem Adı</div>
<div class="hc" style="left:320px;width:87px">Cari Kodu</div>
<div class="hc" style="left:407px;width:68px">Cari Ünvanı</div>
<div class="hc" style="left:475px;width:88px">Açıklama</div>
<div class="hc" style="left:563px;width:78px">İndirimli Tutar</div>
<div class="hc" style="left:641px;width:78px">Genel Toplam</div>
<div class="hc" style="left:719px;width:42px">Döviz</div>
<div class="hc" style="left:761px;width:67px;background:linear-gradient(#ffff30 0%,#f3f31a 55%,#cdd00c 100%);box-shadow:inset -1px -1px 0 #b4b810;letter-spacing:-1.05px;border-left:0;left:762px;width:65px;padding-left:3px">MUHASEBE</div>
<svg style="left:242px;top:7px" width="10" height="6"><polygon points=".2,.2 9,.2 4.6,5" fill="#98bcf3"/></svg>
</div><div id="hline"></div><div id="ind"></div>
<div class="abs" style="left:206px;top:146px;width:828px;height:1px;background:#86a9dc"></div>
<div class="abs" style="left:217px;top:147px;width:817px;height:4px;background:#dbe7f8"></div>
<div class="abs" style="left:217px;top:151px;width:817px;height:1px;background:#86a9dc"></div>
<div class="abs" style="left:217px;top:126px;width:1px;height:368px;background:#86a9dc"></div>
<div class="indc" style="top:152px"></div>
<div class="indc" style="top:172px"></div>
<div class="indc" style="top:192px"></div>
<div class="indc" style="top:212px"></div>
<div class="indc" style="top:232px"></div>
<div class="indc" style="top:252px"></div>
<div class="indc" style="top:272px"></div>
<div class="indc" style="top:292px"></div>
<div class="indc" style="top:312px"></div>
<div class="indc" style="top:332px"></div>
<div class="indc" style="top:352px"></div>
<div class="indc" style="top:372px"></div>
<div class="indc" style="top:392px"></div>
<div class="indc" style="top:412px"></div>
<div class="indc" style="top:432px"></div>
<div class="indc" style="top:452px"></div>
<div class="indc" style="top:472px"></div>
<svg style="left:207px;top:133px" width="9" height="11" viewBox="0 0 9 11"><path d="M1.2,1.6 Q1.2,.6 4.5,.6 Q7.8,.6 7.8,1.6 L7.8,3 L5.6,5.6 L5.6,9.6 L3.4,9.6 L3.4,5.6 L1.2,3 Z M1.2,2.6 H7.8" fill="#eaf2fd" stroke="#5a8ad8" stroke-width=".9" stroke-linejoin="round"/></svg>
<div class="abs" style="left:206px;top:491px;width:828px;height:1.5px;background:#86a9dc;z-index:3"></div>
<div id="sb"><div id="sbt"><i></i></div></div>
<svg style="left:1040px;top:77px" width="10" height="6"><polygon points="0,5.5 9.4,5.5 4.7,.3" fill="#3a4660"/></svg>
<div id="frow">
<div class="fc" style="left:0px;width:41px"><i class="eq"></i></div>
<div class="fc" style="left:41px;width:84px"><i class="eq"></i></div>
<div class="fc" style="left:125px;width:49px"><span class="abc"><b class="bl">A</b>BC</span></div>
<div class="fc" style="left:174px;width:72px"><i class="eq"></i></div>
<div class="fc" style="left:246px;width:63px"><span class="abc g">A<b class="gr">B</b>C</span></div>
<div class="fc" style="left:309px;width:87px"><span class="abc"><b class="bl">A</b>BC</span></div>
<div class="fc" style="left:396px;width:68px"><span class="abc"><b class="bl">A</b>BC</span></div>
<div class="fc" style="left:464px;width:88px"><span class="abc g">A<b class="gr">B</b>C</span></div>
<div class="fc" style="left:552px;width:78px"><i class="eq"></i></div>
<div class="fc" style="left:630px;width:78px"><i class="eq"></i></div>
<div class="fc" style="left:708px;width:42px"><i class="eq"></i></div>
<div class="fc" style="left:750px;width:67px"><i class="eq"></i></div>
</div>
<div class="cell r" style="left:218px;top:152px;width:40px">566</div>
<div class="cell l" style="left:259px;top:152px;width:83px;padding-left:20px"><svg style="left:3px;top:4px" width="13" height="12" viewBox="0 0 13 12"><path d="M1.2,7.4 L4.6,10.6 L11.4,1" fill="none" stroke="#a09a38" stroke-width="2.9" stroke-linejoin="miter"/><path d="M1.2,7.4 L4.6,10.6 L11.4,1" fill="none" stroke="#d2d162" stroke-width="1.7" stroke-linejoin="miter"/></svg>Onaylandı</div>
<div class="cell l" style="left:343px;top:152px;width:48px"></div>
<div class="cell l" style="left:392px;top:152px;width:71px;letter-spacing:-.16px;border-right-width:2px">25.07.2025 11:24</div>
<div class="cell l" style="left:464px;top:152px;width:62px">Satış</div>
<div class="cell l" style="left:527px;top:152px;width:86px">00009</div>
<div class="cell l" style="left:614px;top:152px;width:67px">Cari 2</div>
<div class="cell l" style="left:682px;top:152px;width:87px">Senet kur farkı</div>
<div class="cell r" style="left:770px;top:152px;width:77px">1,89</div>
<div class="cell r" style="left:848px;top:152px;width:77px">2,23</div>
<div class="cell l" style="left:926px;top:152px;width:41px">USD</div>
<div class="cell r last" style="left:968px;top:152px;width:66px">0</div>
<div class="cell r" style="left:218px;top:172px;width:40px">564</div>
<div class="cell l" style="left:259px;top:172px;width:83px;padding-left:20px"><svg style="left:3px;top:4px" width="13" height="12" viewBox="0 0 13 12"><path d="M1.2,7.4 L4.6,10.6 L11.4,1" fill="none" stroke="#a09a38" stroke-width="2.9" stroke-linejoin="miter"/><path d="M1.2,7.4 L4.6,10.6 L11.4,1" fill="none" stroke="#d2d162" stroke-width="1.7" stroke-linejoin="miter"/></svg>Onaylandı</div>
<div class="cell l" style="left:343px;top:172px;width:48px"></div>
<div class="cell l" style="left:392px;top:172px;width:71px;letter-spacing:-.16px;border-right-width:2px">10.07.2025 14:52</div>
<div class="cell l" style="left:464px;top:172px;width:62px">Satış</div>
<div class="cell l" style="left:527px;top:172px;width:86px">00002</div>
<div class="cell l" style="left:614px;top:172px;width:67px">Cari 4</div>
<div class="cell l" style="left:682px;top:172px;width:87px"></div>
<div class="cell r" style="left:770px;top:172px;width:77px">700,00</div>
<div class="cell r" style="left:848px;top:172px;width:77px">840,00</div>
<div class="cell l" style="left:926px;top:172px;width:41px">TL</div>
<div class="cell r last" style="left:968px;top:172px;width:66px">2</div>
<div class="cell r" style="left:218px;top:192px;width:40px">561</div>
<div class="cell l" style="left:259px;top:192px;width:83px;padding-left:20px"><svg style="left:3px;top:4px" width="13" height="12" viewBox="0 0 13 12"><path d="M1.2,7.4 L4.6,10.6 L11.4,1" fill="none" stroke="#a09a38" stroke-width="2.9" stroke-linejoin="miter"/><path d="M1.2,7.4 L4.6,10.6 L11.4,1" fill="none" stroke="#d2d162" stroke-width="1.7" stroke-linejoin="miter"/></svg>Onaylandı</div>
<div class="cell l" style="left:343px;top:192px;width:48px"></div>
<div class="cell l" style="left:392px;top:192px;width:71px;letter-spacing:-.16px;border-right-width:2px">10.07.2025 14:37</div>
<div class="cell l" style="left:464px;top:192px;width:62px">Satış</div>
<div class="cell l" style="left:527px;top:192px;width:86px">00002</div>
<div class="cell l" style="left:614px;top:192px;width:67px">Cari 4</div>
<div class="cell l" style="left:682px;top:192px;width:87px"></div>
<div class="cell r" style="left:770px;top:192px;width:77px">50,00</div>
<div class="cell r" style="left:848px;top:192px;width:77px">60,00</div>
<div class="cell l" style="left:926px;top:192px;width:41px">TL</div>
<div class="cell r last" style="left:968px;top:192px;width:66px">2</div>
<div class="cell r" style="left:218px;top:212px;width:40px">559</div>
<div class="cell l" style="left:259px;top:212px;width:83px;padding-left:20px"><svg style="left:3px;top:4px" width="13" height="12" viewBox="0 0 13 12"><path d="M1.2,7.4 L4.6,10.6 L11.4,1" fill="none" stroke="#a09a38" stroke-width="2.9" stroke-linejoin="miter"/><path d="M1.2,7.4 L4.6,10.6 L11.4,1" fill="none" stroke="#d2d162" stroke-width="1.7" stroke-linejoin="miter"/></svg>Onaylandı</div>
<div class="cell l" style="left:343px;top:212px;width:48px"></div>
<div class="cell l" style="left:392px;top:212px;width:71px;letter-spacing:-.16px;border-right-width:2px">8.07.2025 11:46</div>
<div class="cell l" style="left:464px;top:212px;width:62px">Satış</div>
<div class="cell l" style="left:527px;top:212px;width:86px">00002</div>
<div class="cell l" style="left:614px;top:212px;width:67px">Cari 4</div>
<div class="cell l" style="left:682px;top:212px;width:87px"></div>
<div class="cell r" style="left:770px;top:212px;width:77px">22.500,00</div>
<div class="cell r" style="left:848px;top:212px;width:77px">27.000,00</div>
<div class="cell l" style="left:926px;top:212px;width:41px">TL</div>
<div class="cell r last" style="left:968px;top:212px;width:66px">3</div>
<div class="cell r" style="left:218px;top:232px;width:40px">555</div>
<div class="cell l" style="left:259px;top:232px;width:83px;padding-left:20px"><svg style="left:3px;top:4px" width="13" height="12" viewBox="0 0 13 12"><path d="M1.2,7.4 L4.6,10.6 L11.4,1" fill="none" stroke="#a09a38" stroke-width="2.9" stroke-linejoin="miter"/><path d="M1.2,7.4 L4.6,10.6 L11.4,1" fill="none" stroke="#d2d162" stroke-width="1.7" stroke-linejoin="miter"/></svg>Onaylandı</div>
<div class="cell l" style="left:343px;top:232px;width:48px"></div>
<div class="cell l" style="left:392px;top:232px;width:71px;letter-spacing:-.16px;border-right-width:2px">8.07.2025 09:58</div>
<div class="cell l" style="left:464px;top:232px;width:62px">Satış</div>
<div class="cell l" style="left:527px;top:232px;width:86px">00002</div>
<div class="cell l" style="left:614px;top:232px;width:67px">Cari 4</div>
<div class="cell l" style="left:682px;top:232px;width:87px"></div>
<div class="cell r" style="left:770px;top:232px;width:77px">22.500,00</div>
<div class="cell r" style="left:848px;top:232px;width:77px">27.000,00</div>
<div class="cell l" style="left:926px;top:232px;width:41px">TL</div>
<div class="cell r last" style="left:968px;top:232px;width:66px">2</div>
<div class="cell r" style="left:218px;top:252px;width:40px">550</div>
<div class="cell l" style="left:259px;top:252px;width:83px;padding-left:20px"><svg style="left:3px;top:4px" width="13" height="12" viewBox="0 0 13 12"><path d="M1.2,7.4 L4.6,10.6 L11.4,1" fill="none" stroke="#a09a38" stroke-width="2.9" stroke-linejoin="miter"/><path d="M1.2,7.4 L4.6,10.6 L11.4,1" fill="none" stroke="#d2d162" stroke-width="1.7" stroke-linejoin="miter"/></svg>Onaylandı</div>
<div class="cell l" style="left:343px;top:252px;width:48px"></div>
<div class="cell l" style="left:392px;top:252px;width:71px;letter-spacing:-.16px;border-right-width:2px">7.07.2025 12:03</div>
<div class="cell l" style="left:464px;top:252px;width:62px">Satış</div>
<div class="cell l" style="left:527px;top:252px;width:86px">00002</div>
<div class="cell l" style="left:614px;top:252px;width:67px">Cari 4</div>
<div class="cell l" style="left:682px;top:252px;width:87px"></div>
<div class="cell r" style="left:770px;top:252px;width:77px">500,00</div>
<div class="cell r" style="left:848px;top:252px;width:77px">530,00</div>
<div class="cell l" style="left:926px;top:252px;width:41px">TL</div>
<div class="cell r last" style="left:968px;top:252px;width:66px">0</div>
<div class="cell r" style="left:218px;top:272px;width:40px">548</div>
<div class="cell l" style="left:259px;top:272px;width:83px;padding-left:20px"><svg style="left:3px;top:4px" width="13" height="12" viewBox="0 0 13 12"><path d="M1.2,7.4 L4.6,10.6 L11.4,1" fill="none" stroke="#a09a38" stroke-width="2.9" stroke-linejoin="miter"/><path d="M1.2,7.4 L4.6,10.6 L11.4,1" fill="none" stroke="#d2d162" stroke-width="1.7" stroke-linejoin="miter"/></svg>Onaylandı</div>
<div class="cell l" style="left:343px;top:272px;width:48px"></div>
<div class="cell l" style="left:392px;top:272px;width:71px;letter-spacing:-.16px;border-right-width:2px">7.07.2025 09:41</div>
<div class="cell l" style="left:464px;top:272px;width:62px">Satış</div>
<div class="cell l" style="left:527px;top:272px;width:86px">00002</div>
<div class="cell l" style="left:614px;top:272px;width:67px">Cari 4</div>
<div class="cell l" style="left:682px;top:272px;width:87px"></div>
<div class="cell r" style="left:770px;top:272px;width:77px">22.500,00</div>
<div class="cell r" style="left:848px;top:272px;width:77px">27.000,00</div>
<div class="cell l" style="left:926px;top:272px;width:41px">TL</div>
<div class="cell r last" style="left:968px;top:272px;width:66px">2</div>
<div class="cell r" style="left:218px;top:292px;width:40px">546</div>
<div class="cell l" style="left:259px;top:292px;width:83px;padding-left:20px"><svg style="left:3px;top:4px" width="13" height="12" viewBox="0 0 13 12"><path d="M1.2,7.4 L4.6,10.6 L11.4,1" fill="none" stroke="#a09a38" stroke-width="2.9" stroke-linejoin="miter"/><path d="M1.2,7.4 L4.6,10.6 L11.4,1" fill="none" stroke="#d2d162" stroke-width="1.7" stroke-linejoin="miter"/></svg>Onaylandı</div>
<div class="cell l" style="left:343px;top:292px;width:48px"></div>
<div class="cell l" style="left:392px;top:292px;width:71px;letter-spacing:-.16px;border-right-width:2px">4.07.2025 18:05</div>
<div class="cell l" style="left:464px;top:292px;width:62px">Satış</div>
<div class="cell l" style="left:527px;top:292px;width:86px">00002</div>
<div class="cell l" style="left:614px;top:292px;width:67px">Cari 4</div>
<div class="cell l" style="left:682px;top:292px;width:87px"></div>
<div class="cell r" style="left:770px;top:292px;width:77px">225,00</div>
<div class="cell r" style="left:848px;top:292px;width:77px">270,00</div>
<div class="cell l" style="left:926px;top:292px;width:41px">TL</div>
<div class="cell r last" style="left:968px;top:292px;width:66px">2</div>
<div class="cell r" style="left:218px;top:312px;width:40px">545</div>
<div class="cell l" style="left:259px;top:312px;width:83px;padding-left:20px"><svg style="left:3px;top:4px" width="13" height="12" viewBox="0 0 13 12"><path d="M1.2,7.4 L4.6,10.6 L11.4,1" fill="none" stroke="#a09a38" stroke-width="2.9" stroke-linejoin="miter"/><path d="M1.2,7.4 L4.6,10.6 L11.4,1" fill="none" stroke="#d2d162" stroke-width="1.7" stroke-linejoin="miter"/></svg>Onaylandı</div>
<div class="cell l" style="left:343px;top:312px;width:48px"></div>
<div class="cell l" style="left:392px;top:312px;width:71px;letter-spacing:-.16px;border-right-width:2px">4.07.2025 17:49</div>
<div class="cell l" style="left:464px;top:312px;width:62px">Satış</div>
<div class="cell l" style="left:527px;top:312px;width:86px">00002</div>
<div class="cell l" style="left:614px;top:312px;width:67px">Cari 4</div>
<div class="cell l" style="left:682px;top:312px;width:87px"></div>
<div class="cell r" style="left:770px;top:312px;width:77px">225,00</div>
<div class="cell r" style="left:848px;top:312px;width:77px">270,00</div>
<div class="cell l" style="left:926px;top:312px;width:41px">TL</div>
<div class="cell r last" style="left:968px;top:312px;width:66px">2</div>
<div class="cell r" style="left:218px;top:332px;width:40px">540</div>
<div class="cell l" style="left:259px;top:332px;width:83px;padding-left:20px"><svg style="left:3px;top:4px" width="13" height="12" viewBox="0 0 13 12"><path d="M1.2,7.4 L4.6,10.6 L11.4,1" fill="none" stroke="#a09a38" stroke-width="2.9" stroke-linejoin="miter"/><path d="M1.2,7.4 L4.6,10.6 L11.4,1" fill="none" stroke="#d2d162" stroke-width="1.7" stroke-linejoin="miter"/></svg>Onaylandı</div>
<div class="cell l" style="left:343px;top:332px;width:48px"></div>
<div class="cell l" style="left:392px;top:332px;width:71px;letter-spacing:-.16px;border-right-width:2px">4.07.2025 17:31</div>
<div class="cell l" style="left:464px;top:332px;width:62px">Satış</div>
<div class="cell l" style="left:527px;top:332px;width:86px">00002</div>
<div class="cell l" style="left:614px;top:332px;width:67px">Cari 4</div>
<div class="cell l" style="left:682px;top:332px;width:87px"></div>
<div class="cell r" style="left:770px;top:332px;width:77px">225,00</div>
<div class="cell r" style="left:848px;top:332px;width:77px">270,00</div>
<div class="cell l" style="left:926px;top:332px;width:41px">TL</div>
<div class="cell r last" style="left:968px;top:332px;width:66px">2</div>
<div class="cell r" style="left:218px;top:352px;width:40px">537</div>
<div class="cell l" style="left:259px;top:352px;width:83px;padding-left:20px"><svg style="left:3px;top:4px" width="13" height="12" viewBox="0 0 13 12"><path d="M1.2,7.4 L4.6,10.6 L11.4,1" fill="none" stroke="#a09a38" stroke-width="2.9" stroke-linejoin="miter"/><path d="M1.2,7.4 L4.6,10.6 L11.4,1" fill="none" stroke="#d2d162" stroke-width="1.7" stroke-linejoin="miter"/></svg>Onaylandı</div>
<div class="cell l" style="left:343px;top:352px;width:48px"></div>
<div class="cell l" style="left:392px;top:352px;width:71px;letter-spacing:-.16px;border-right-width:2px">4.07.2025 17:12</div>
<div class="cell l" style="left:464px;top:352px;width:62px">Satış</div>
<div class="cell l" style="left:527px;top:352px;width:86px">00002</div>
<div class="cell l" style="left:614px;top:352px;width:67px">Cari 4</div>
<div class="cell l" style="left:682px;top:352px;width:87px"></div>
<div class="cell r" style="left:770px;top:352px;width:77px">225,00</div>
<div class="cell r" style="left:848px;top:352px;width:77px">270,00</div>
<div class="cell l" style="left:926px;top:352px;width:41px">TL</div>
<div class="cell r last" style="left:968px;top:352px;width:66px">2</div>
<div class="cell r" style="left:218px;top:372px;width:40px">536</div>
<div class="cell l" style="left:259px;top:372px;width:83px;padding-left:20px"><svg style="left:3px;top:4px" width="13" height="12" viewBox="0 0 13 12"><path d="M1.2,7.4 L4.6,10.6 L11.4,1" fill="none" stroke="#a09a38" stroke-width="2.9" stroke-linejoin="miter"/><path d="M1.2,7.4 L4.6,10.6 L11.4,1" fill="none" stroke="#d2d162" stroke-width="1.7" stroke-linejoin="miter"/></svg>Onaylandı</div>
<div class="cell l" style="left:343px;top:372px;width:48px"></div>
<div class="cell l" style="left:392px;top:372px;width:71px;letter-spacing:-.16px;border-right-width:2px">4.07.2025 16:44</div>
<div class="cell l" style="left:464px;top:372px;width:62px">Satış</div>
<div class="cell l" style="left:527px;top:372px;width:86px">00002</div>
<div class="cell l" style="left:614px;top:372px;width:67px">Cari 4</div>
<div class="cell l" style="left:682px;top:372px;width:87px"></div>
<div class="cell r" style="left:770px;top:372px;width:77px">225,00</div>
<div class="cell r" style="left:848px;top:372px;width:77px">270,00</div>
<div class="cell l" style="left:926px;top:372px;width:41px">TL</div>
<div class="cell r last" style="left:968px;top:372px;width:66px">0</div>
<div class="cell r" style="left:218px;top:392px;width:40px">535</div>
<div class="cell l" style="left:259px;top:392px;width:83px;padding-left:20px"><svg style="left:3px;top:4px" width="13" height="12" viewBox="0 0 13 12"><path d="M1.2,7.4 L4.6,10.6 L11.4,1" fill="none" stroke="#a09a38" stroke-width="2.9" stroke-linejoin="miter"/><path d="M1.2,7.4 L4.6,10.6 L11.4,1" fill="none" stroke="#d2d162" stroke-width="1.7" stroke-linejoin="miter"/></svg>Onaylandı</div>
<div class="cell l" style="left:343px;top:392px;width:48px"></div>
<div class="cell l" style="left:392px;top:392px;width:71px;letter-spacing:-.16px;border-right-width:2px">4.07.2025 16:20</div>
<div class="cell l" style="left:464px;top:392px;width:62px">Satış</div>
<div class="cell l" style="left:527px;top:392px;width:86px">00002</div>
<div class="cell l" style="left:614px;top:392px;width:67px">Cari 4</div>
<div class="cell l" style="left:682px;top:392px;width:87px"></div>
<div class="cell r" style="left:770px;top:392px;width:77px">225,00</div>
<div class="cell r" style="left:848px;top:392px;width:77px">270,00</div>
<div class="cell l" style="left:926px;top:392px;width:41px">TL</div>
<div class="cell r last" style="left:968px;top:392px;width:66px">0</div>
<div class="cell r" style="left:218px;top:412px;width:40px">533</div>
<div class="cell l" style="left:259px;top:412px;width:83px;padding-left:20px"><svg style="left:3px;top:4px" width="13" height="12" viewBox="0 0 13 12"><path d="M1.2,7.4 L4.6,10.6 L11.4,1" fill="none" stroke="#a09a38" stroke-width="2.9" stroke-linejoin="miter"/><path d="M1.2,7.4 L4.6,10.6 L11.4,1" fill="none" stroke="#d2d162" stroke-width="1.7" stroke-linejoin="miter"/></svg>Onaylandı</div>
<div class="cell l" style="left:343px;top:412px;width:48px"></div>
<div class="cell l" style="left:392px;top:412px;width:71px;letter-spacing:-.16px;border-right-width:2px">3.07.2025 15:33</div>
<div class="cell l" style="left:464px;top:412px;width:62px">Alış İade</div>
<div class="cell l" style="left:527px;top:412px;width:86px">00002</div>
<div class="cell l" style="left:614px;top:412px;width:67px">Cari 4</div>
<div class="cell l" style="left:682px;top:412px;width:87px"></div>
<div class="cell r" style="left:770px;top:412px;width:77px">5.000,00</div>
<div class="cell r" style="left:848px;top:412px;width:77px">6.000,00</div>
<div class="cell l" style="left:926px;top:412px;width:41px">TL</div>
<div class="cell r last" style="left:968px;top:412px;width:66px">0</div>
<div class="cell r" style="left:218px;top:432px;width:40px">528</div>
<div class="cell l" style="left:259px;top:432px;width:83px;padding-left:20px"><svg style="left:3px;top:4px" width="13" height="12" viewBox="0 0 13 12"><path d="M1.2,7.4 L4.6,10.6 L11.4,1" fill="none" stroke="#a09a38" stroke-width="2.9" stroke-linejoin="miter"/><path d="M1.2,7.4 L4.6,10.6 L11.4,1" fill="none" stroke="#d2d162" stroke-width="1.7" stroke-linejoin="miter"/></svg>Onaylandı</div>
<div class="cell l" style="left:343px;top:432px;width:48px"></div>
<div class="cell l" style="left:392px;top:432px;width:71px;letter-spacing:-.16px;border-right-width:2px">3.07.2025 17:08</div>
<div class="cell l" style="left:464px;top:432px;width:62px">Satış</div>
<div class="cell l" style="left:527px;top:432px;width:86px">00002</div>
<div class="cell l" style="left:614px;top:432px;width:67px">Cari 4</div>
<div class="cell l" style="left:682px;top:432px;width:87px"></div>
<div class="cell r" style="left:770px;top:432px;width:77px">187,00</div>
<div class="cell r" style="left:848px;top:432px;width:77px">224,40</div>
<div class="cell l" style="left:926px;top:432px;width:41px">TL</div>
<div class="cell r last" style="left:968px;top:432px;width:66px">1</div>
<div class="cell r" style="left:218px;top:452px;width:40px">526</div>
<div class="cell l" style="left:259px;top:452px;width:83px;padding-left:20px"><svg style="left:3px;top:4px" width="13" height="12" viewBox="0 0 13 12"><path d="M1.2,7.4 L4.6,10.6 L11.4,1" fill="none" stroke="#a09a38" stroke-width="2.9" stroke-linejoin="miter"/><path d="M1.2,7.4 L4.6,10.6 L11.4,1" fill="none" stroke="#d2d162" stroke-width="1.7" stroke-linejoin="miter"/></svg>Onaylandı</div>
<div class="cell l" style="left:343px;top:452px;width:48px"></div>
<div class="cell l" style="left:392px;top:452px;width:71px;letter-spacing:-.16px;border-right-width:2px">3.07.2025 16:15</div>
<div class="cell l" style="left:464px;top:452px;width:62px">Satış</div>
<div class="cell l" style="left:527px;top:452px;width:86px">00002</div>
<div class="cell l" style="left:614px;top:452px;width:67px">Cari 4</div>
<div class="cell l" style="left:682px;top:452px;width:87px"></div>
<div class="cell r" style="left:770px;top:452px;width:77px">34.100,00</div>
<div class="cell r" style="left:848px;top:452px;width:77px">40.920,00</div>
<div class="cell l" style="left:926px;top:452px;width:41px">TL</div>
<div class="cell r last" style="left:968px;top:452px;width:66px">0</div>
<div class="cell r" style="left:218px;top:472px;width:40px">516</div>
<div class="cell l" style="left:259px;top:472px;width:83px;padding-left:20px"><svg style="left:3px;top:4px" width="13" height="12" viewBox="0 0 13 12"><path d="M1.2,7.4 L4.6,10.6 L11.4,1" fill="none" stroke="#a09a38" stroke-width="2.9" stroke-linejoin="miter"/><path d="M1.2,7.4 L4.6,10.6 L11.4,1" fill="none" stroke="#d2d162" stroke-width="1.7" stroke-linejoin="miter"/></svg>Onaylandı</div>
<div class="cell l" style="left:343px;top:472px;width:48px"></div>
<div class="cell l" style="left:392px;top:472px;width:71px;letter-spacing:-.16px;border-right-width:2px">30.06.2025 10:27</div>
<div class="cell l" style="left:464px;top:472px;width:62px">Satış</div>
<div class="cell l" style="left:527px;top:472px;width:86px">00002</div>
<div class="cell l" style="left:614px;top:472px;width:67px">Cari 4</div>
<div class="cell l" style="left:682px;top:472px;width:87px"></div>
<div class="cell r" style="left:770px;top:472px;width:77px">2.000,00</div>
<div class="cell r" style="left:848px;top:472px;width:77px">2.400,00</div>
<div class="cell l" style="left:926px;top:472px;width:41px">TL</div>
<div class="cell r last" style="left:968px;top:472px;width:66px">2</div>
</div>
<div id="ltitle">Muhasebe alanında yer alan değer ve açıklamaları</div>
<div id="leg"><div style="position:absolute;left:0;top:0;width:250px;height:13px;background:#000;color:#fff;font-weight:bold;font-size:7.5px;line-height:12px"><span style="position:absolute;left:10px">Değer</span><span style="position:absolute;left:40px">Açıklama</span><span style="position:absolute;left:34px;top:1px;width:1px;height:12px;background:#fff"></span></div>
<div style="position:absolute;left:34px;top:13px;width:1px;height:200px;background:#000"></div>
<div class="lr" style="top:13.0px;height:12.5px"><span class="n">0</span><span class="d">&nbsp;Hiçbir işlem yapılmamış</span></div>
<div class="lr" style="top:25.5px;height:12.5px"><span class="n">1</span><span class="d">Muhasebeleşmiş</span></div>
<div class="lr" style="top:38.0px;height:12.5px"><span class="n">2</span><span class="d">Efatura kaydı oluşmuş</span></div>
<div class="lr" style="top:50.5px;height:12.5px"><span class="n">3</span><span class="d">Muhasebeleşmiş ve Efaturası oluşmuş,</span></div>
<div class="lr" style="top:63.0px;height:12.5px"><span class="n">4</span><span class="d">Takip hesabı oluşmuş</span></div>
<div class="lr" style="top:75.5px;height:12.5px"><span class="n">5</span><span class="d">Muhasebeleşmiş ve Takip hesabı Oluşmuş</span></div>
<div class="lr" style="top:88.0px;height:12.5px"><span class="n">6</span><span class="d">Efaturası ve Takip Hesabı oluşmuş</span></div>
<div class="lr" style="top:100.5px;height:12.5px"><span class="n">7</span><span class="d">Muhasebesi, Efaturası, Takip hesabı oluşmuş</span></div>
<div class="lr" style="top:113.0px;height:12.5px"><span class="n">8</span><span class="d">UFRS kaydı yapılmış.</span></div>
<div class="lr" style="top:125.5px;height:12.5px"><span class="n">9</span><span class="d">Muhasebeleşmiş ve UFRS Kaydı yapılmış</span></div>
<div class="lr" style="top:138.0px;height:12.5px"><span class="n">10</span><span class="d">Efatura ve UFRS kaydı yapılmış</span></div>
<div class="lr" style="top:150.5px;height:12.5px"><span class="n">11</span><span class="d">Muhasebesi Efaturası ve UFRS Kaydı Yapılmış</span></div>
<div class="lr" style="top:163.0px;height:12.5px"><span class="n">12</span><span class="d">UFRS ve Takip hesabı yapılmış</span></div>
<div class="lr" style="top:175.5px;height:12.5px"><span class="n">13</span><span class="d">Muhasebe, Takip Hesabı ve UFRS yapılmış</span></div>
<div class="lr" style="top:188.0px;height:12.5px"><span class="n">14</span><span class="d">Efatura, Takip Hesabı ve UFRS yapılmış</span></div>
<div class="lr" style="top:200.5px;height:12.5px"><span class="n">15</span><span class="d">Muhasebe, Efatura, Takip Hesabı ve UFRS yapılmış</span></div>
</div>
<div id="redtxt">Satış İşlem Listesindeki<br>Muhasebe alanında yazan<br>değerler, oluşturulan Değer ve<br>Açıklama tablosundaki<br>açıklamaya karşılık gelmektedir.</div>
<div style="position:absolute;left:964px;top:101px;width:72px;height:393.5px;border:3px solid #f00;border-left-width:3.4px;border-bottom-width:3.5px;z-index:5"></div>
<svg style="left:0;top:0" width="1356" height="518"><line x1="1035" y1="159" x2="1098" y2="59.6" stroke="#f00" stroke-width="2.4"/><polygon points="1105.2,48.3 1092.4,57 1102.6,64" fill="#f00"/></svg>
</body></html>
